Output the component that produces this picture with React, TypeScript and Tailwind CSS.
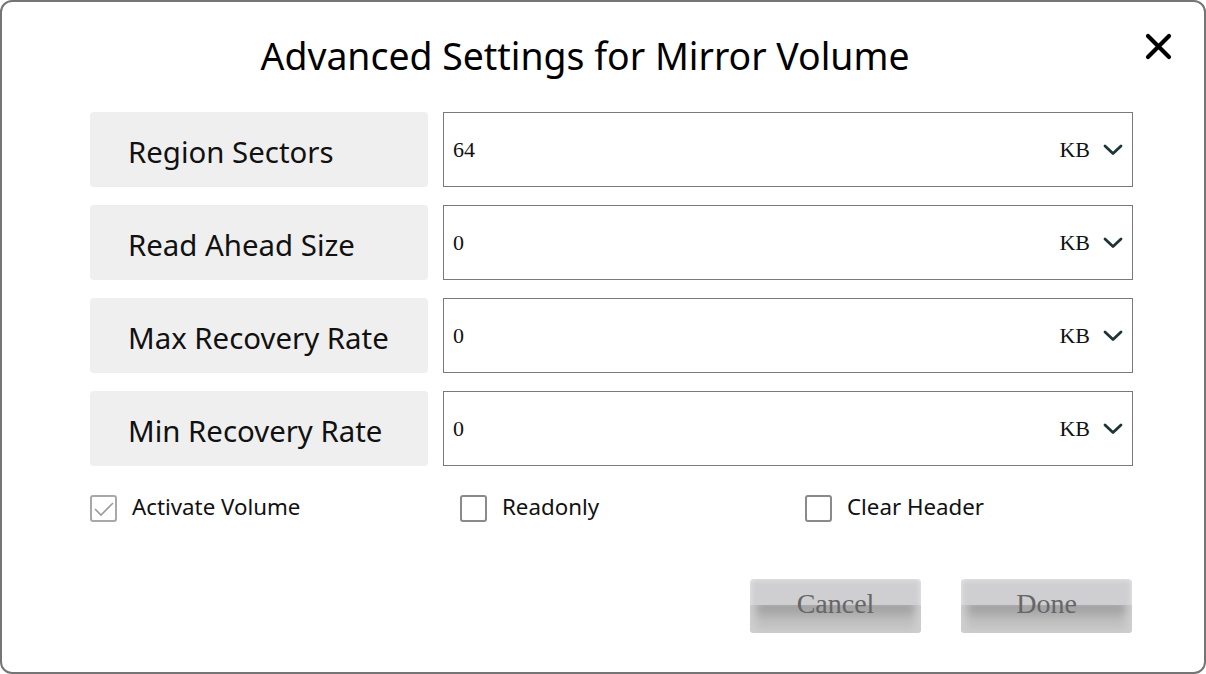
import React from 'react';

const rows = [
  { label: 'Region Sectors', value: '64' },
  { label: 'Read Ahead Size', value: '0' },
  { label: 'Max Recovery Rate', value: '0' },
  { label: 'Min Recovery Rate', value: '0' },
];

const Chevron = () => (
  <svg width="20" height="12" viewBox="0 0 20 12" fill="none">
    <path d="M2 2l8 7.5L18 2" stroke="#1e3535" strokeWidth="2.8" strokeLinecap="round" strokeLinejoin="round" />
  </svg>
);

const Check = ({ checked, label }: { checked?: boolean; label: string }) => (
  <div className="flex items-center gap-[15px]">
    <div
      className={`w-[27px] h-[27px] rounded-[3px] border-2 flex items-center justify-center ${
        checked ? 'border-[#a8a8a8]' : 'border-[#8a8a8a]'
      }`}
    >
      {checked && (
        <svg width="22" height="18" viewBox="0 0 22 18" fill="none">
          <path d="M2 9l6 6L20 3" stroke="#9a9a9a" strokeWidth="1.6" />
        </svg>
      )}
    </div>
    <span className="text-[22.3px] leading-[28px] text-[#111] -mt-[3px]">{label}</span>
  </div>
);

const Btn = ({ label }: { label: string }) => (
  <button className="relative w-[171px] h-[54px] rounded-[4px] overflow-hidden bg-[#cfcfd1] shadow-[inset_0_0_6px_rgba(255,255,255,0.6)] pb-[3px]">
    <div className="absolute left-0 right-0 top-[26px] bottom-0 bg-[linear-gradient(to_bottom,#9b9b9b,#bdbdbd_55%,#cbcbcd)] shadow-[inset_10px_0_8px_-4px_#cfcfd1,inset_-10px_0_8px_-4px_#cfcfd1]" />
    <span className="relative font-['Liberation_Serif',serif] text-[28px] text-[#666] leading-none">{label}</span>
  </button>
);

export default function App() {
  return (
    <div className="w-[1206px] h-[674px] bg-white border-2 border-[#757575] rounded-[12px] font-['Noto_Sans',sans-serif] flex flex-col">
      <div className="relative flex justify-center pt-[25px] pr-[36px]">
        <h1 className="text-[37.4px] leading-[57px] text-black">
          Advanced Settings for Mirror Volume
        </h1>
        <svg className="absolute right-[32px] top-[31px]" width="27" height="27" viewBox="0 0 27 27">
          <path d="M3 3l21 21M24 3L3 24" stroke="#000" strokeWidth="4.2" strokeLinecap="round" />
        </svg>
      </div>

      <div className="flex flex-col gap-[18px] pl-[88px] pr-[71px] mt-[28px]">
        {rows.map((r) => (
          <div key={r.label} className="flex gap-[15px] h-[75px]">
            <div className="w-[338px] bg-[#efefef] rounded-[4px] flex items-center pl-[38px] pt-[6px]">
              <span className="text-[29.4px] text-[#111]">{r.label}</span>
            </div>
            <div className="flex-1 border border-[#7a7a7a] flex items-center pl-[9px] pr-[9px] font-['Liberation_Serif',serif] text-[22px] text-[#111]">
              <span className="flex-1">{r.value}</span>
              <span className="mr-[13px]">KB</span>
              <Chevron />
            </div>
          </div>
        ))}
      </div>

      <div className="flex pl-[88px] mt-[29px]">
        <div className="w-[370px]">
          <Check checked label="Activate Volume" />
        </div>
        <div className="w-[345px]">
          <Check label="Readonly" />
        </div>
        <Check label="Clear Header" />
      </div>

      <div className="flex justify-end gap-[40px] pr-[72px] mt-[57px]">
        <Btn label="Cancel" />
        <Btn label="Done" />
      </div>
    </div>
  );
}
